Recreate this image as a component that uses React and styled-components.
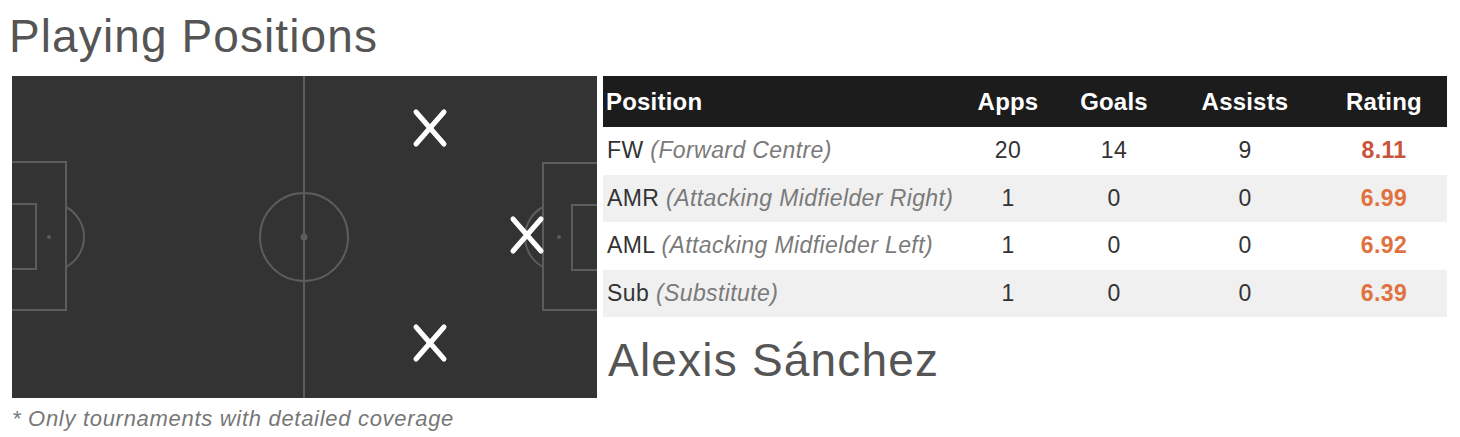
import React from "react";
import styled, { createGlobalStyle } from "styled-components";

const GlobalStyle = createGlobalStyle`
  html, body {
    margin: 0;
    padding: 0;
    background: #ffffff;
  }
  body {
    font-family: "Liberation Sans", Arial, sans-serif;
  }
`;

const Page = styled.div`
  width: 1460px;
  height: 437px;
  box-sizing: border-box;
  padding: 0 13px 0 12px;
  overflow: hidden;
`;

const Title = styled.h2`
  margin: 0 0 13px -3px;
  padding-top: 10px;
  font-size: 46px;
  line-height: 53px;
  font-weight: normal;
  letter-spacing: 1.1px;
  color: #555555;
`;

const Columns = styled.div`
  display: flex;
  gap: 6px;
  align-items: flex-start;
`;

const PitchColumn = styled.div`
  width: 585px;
  display: flex;
  flex-direction: column;
`;

const PitchBox = styled.div`
  width: 585px;
  height: 322px;
  background: #333333;
`;

const Footnote = styled.p`
  margin: 8px 0 0;
  font-size: 22px;
  line-height: 26px;
  font-style: italic;
  letter-spacing: 0.7px;
  color: #777777;
`;

const StatsColumn = styled.div`
  width: 844px;
  display: flex;
  flex-direction: column;
`;

const Row = styled.div`
  display: grid;
  grid-template-columns: 354px 102px 110px 152px 126px;
  align-items: center;
  height: ${(p) => (p.$head ? "51px" : "47.5px")};
  background: ${(p) => (p.$head ? "#1c1c1c" : p.$alt ? "#f0f0f0" : "#ffffff")};
`;

const HeadCell = styled.div`
  font-size: 24px;
  font-weight: bold;
  color: #ffffff;
  letter-spacing: 0.2px;
  text-align: ${(p) => (p.$left ? "left" : "center")};
  padding-left: ${(p) => (p.$left ? "3px" : "0")};
`;

const Cell = styled.div`
  font-size: 23px;
  color: #333333;
  letter-spacing: 0.4px;
  text-align: ${(p) => (p.$left ? "left" : "center")};
  padding-left: ${(p) => (p.$left ? "4px" : "0")};
  white-space: nowrap;
`;

const Desc = styled.span`
  font-style: italic;
  color: #7a7a7a;
`;

const Rating = styled(Cell)`
  font-weight: bold;
  color: ${(p) => (p.$top ? "#c9533b" : "#e0723f")};
`;

const PlayerName = styled.h2`
  margin: 17px 0 0 5px;
  font-size: 46px;
  line-height: 53px;
  font-weight: normal;
  letter-spacing: 1.2px;
  color: #555555;
`;

const LINE = "#5c5c5c";

const Cross = ({ x, y }) => (
  <g stroke="#ffffff" strokeWidth="5" strokeLinecap="round">
    <line x1={x - 14} y1={y - 16} x2={x + 14} y2={y + 16} />
    <line x1={x + 14} y1={y - 16} x2={x - 14} y2={y + 16} />
  </g>
);

const Pitch = ({ spots }) => (
  <PitchBox>
    <svg width="585" height="322" viewBox="0 0 585 322">
      <g fill="none" stroke={LINE} strokeWidth="2">
        <line x1="292" y1="0" x2="292" y2="322" />
        <circle cx="292" cy="161" r="44" />
        {/* left end */}
        <rect x="-2" y="86" width="56" height="148" />
        <rect x="-2" y="128" width="26" height="65" />
        <path d="M54 131 A34 34 0 0 1 54 191" />
        {/* right end */}
        <rect x="531" y="87" width="56" height="147" />
        <rect x="560" y="129" width="27" height="65" />
        <path d="M531 131 A34 34 0 0 0 531 191" />
      </g>
      <g fill={LINE}>
        <circle cx="292" cy="161" r="3.5" />
        <circle cx="37" cy="161" r="2" />
        <circle cx="547" cy="161" r="2" />
      </g>
      {spots.map((s, i) => (
        <Cross key={i} x={s.x} y={s.y} />
      ))}
    </svg>
  </PitchBox>
);

const rows = [
  { code: "FW", desc: "Forward Centre", apps: 20, goals: 14, assists: 9, rating: "8.11" },
  { code: "AMR", desc: "Attacking Midfielder Right", apps: 1, goals: 0, assists: 0, rating: "6.99" },
  { code: "AML", desc: "Attacking Midfielder Left", apps: 1, goals: 0, assists: 0, rating: "6.92" },
  { code: "Sub", desc: "Substitute", apps: 1, goals: 0, assists: 0, rating: "6.39" },
];

const spots = [
  { x: 418, y: 52 },
  { x: 515, y: 159 },
  { x: 418, y: 267 },
];

const App = () => {
  return (
    <Page>
      <GlobalStyle />
      <Title>Playing Positions</Title>
      <Columns>
        <PitchColumn>
          <Pitch spots={spots} />
          <Footnote>* Only tournaments with detailed coverage</Footnote>
        </PitchColumn>
        <StatsColumn>
          <Row $head>
            <HeadCell $left>Position</HeadCell>
            <HeadCell>Apps</HeadCell>
            <HeadCell>Goals</HeadCell>
            <HeadCell>Assists</HeadCell>
            <HeadCell>Rating</HeadCell>
          </Row>
          {rows.map((r, i) => (
            <Row key={r.code} $alt={i % 2 === 1}>
              <Cell $left>
                {r.code} <Desc>({r.desc})</Desc>
              </Cell>
              <Cell>{r.apps}</Cell>
              <Cell>{r.goals}</Cell>
              <Cell>{r.assists}</Cell>
              <Rating $top={i === 0}>{r.rating}</Rating>
            </Row>
          ))}
          <PlayerName>Alexis Sánchez</PlayerName>
        </StatsColumn>
      </Columns>
    </Page>
  );
};

export default App;
